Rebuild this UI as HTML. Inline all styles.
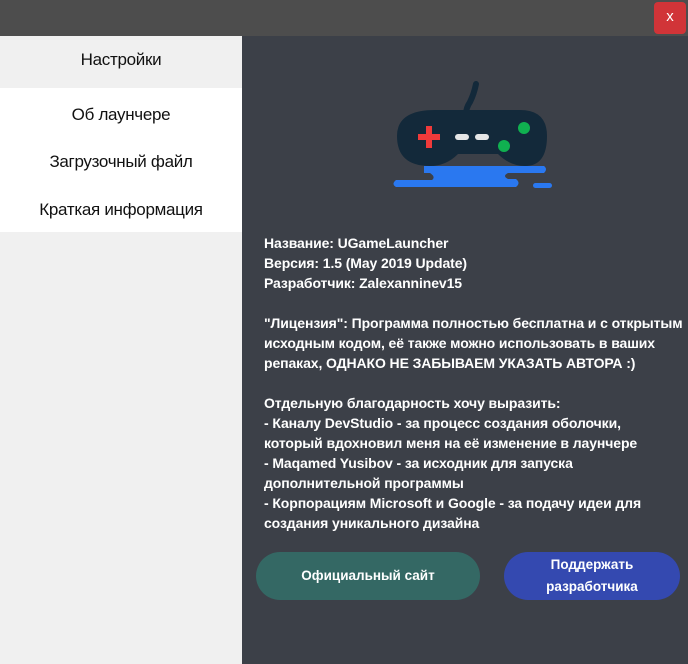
<!DOCTYPE html>
<html><head><meta charset="utf-8"><style>
*{margin:0;padding:0;box-sizing:border-box}
body{width:688px;height:664px;overflow:hidden;background:#3c4048;font-family:"Segoe UI","Liberation Sans",sans-serif;position:relative}
#top{position:absolute;left:0;top:0;width:688px;height:36px;background:#4d4d4d}
#x{position:absolute;left:654px;top:2px;width:32px;height:32px;background:#d13438;border-radius:4px;color:#fff;font-size:15px;text-align:center;line-height:30px}
#side{position:absolute;left:0;top:36px;width:242px;height:628px;background:#f0f0f0}
#menu{position:absolute;left:0;top:52px;width:242px;height:144px;background:#fff}
.it{position:absolute;left:0;width:242px;text-align:center;font-size:17px;color:#111;letter-spacing:-0.3px}
#txt{position:absolute;left:264px;top:233px;color:#fff;font-weight:bold;font-size:14px;line-height:20px;white-space:nowrap;letter-spacing:-0.1px}
.b{position:absolute;top:552px;height:48px;border-radius:24px;color:#fff;font-weight:bold;font-size:13.5px;text-align:center;display:flex;align-items:center;justify-content:center;line-height:22px}
</style></head><body>
<div id="top"></div><div id="x">x</div>
<div id="side">
<div class="it" style="top:14px">Настройки</div>
<div id="menu"></div>
<div class="it" style="top:69px">Об лаунчере</div>
<div class="it" style="top:116px">Загрузочный файл</div>
<div class="it" style="top:164px">Краткая информация</div>
</div>
<svg style="position:absolute;left:380px;top:70px" width="180" height="130" viewBox="0 0 180 130">
<path d="M96 14 Q94 24 90 32 Q86 38 86 44" stroke="#13293a" stroke-width="6" fill="none" stroke-linecap="round"/>
<path d="M44 96 H164 Q168 99 164 103 H128 Q122 106 128 109 H136 Q141 113 136 117 H16 Q11 114 16 110 H52 Q56 107 50 103 H44 Z" fill="#2a78f0"/>
<rect x="153" y="113" width="19" height="5" rx="2.5" fill="#2a78f0"/>
<path d="M55 40 H140 Q167 40 167 66 Q167 96 145 96 Q130 96 118 84 H78 Q66 96 50 96 Q17 96 17 66 Q17 40 55 40 Z" fill="#13293a"/>
<path d="M46 56 h6 v8 h8 v6 h-8 v8 h-6 v-8 h-8 v-6 h8 z" fill="#f03a3a"/>
<rect x="75" y="64" width="14" height="6" rx="3" fill="#e6e6e6"/>
<rect x="95" y="64" width="14" height="6" rx="3" fill="#e6e6e6"/>
<circle cx="144" cy="58" r="6" fill="#10b050"/>
<circle cx="124" cy="76" r="6" fill="#10b050"/>
</svg>
<div id="txt">Название: UGameLauncher<br>Версия: 1.5 (May 2019 Update)<br>Разработчик: Zalexanninev15<br><br>"Лицензия": Программа полностью бесплатна и с открытым<br>исходным кодом, её также можно использовать в ваших<br>репаках, ОДНАКО НЕ ЗАБЫВАЕМ УКАЗАТЬ АВТОРА :)<br><br>Отдельную благодарность хочу выразить:<br>- Каналу DevStudio - за процесс создания оболочки,<br>который вдохновил меня на её изменение в лаунчере<br>- Maqamed Yusibov - за исходник для запуска<br>дополнительной программы<br>- Корпорациям Microsoft и Google - за подачу идеи для<br>создания уникального дизайна</div>
<div class="b" style="left:256px;width:224px;background:#346864">Официальный сайт</div>
<div class="b" style="left:504px;width:176px;background:#3449b0">Поддержать<br>разработчика</div>
</body></html>
